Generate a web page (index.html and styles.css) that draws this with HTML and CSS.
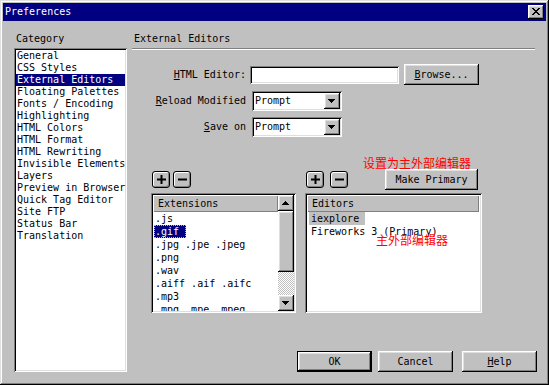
FILE: index.html
```html
<!DOCTYPE html>
<html lang="en">
<head>
  <meta charset="UTF-8" />
  <title>Preferences</title>
  <link rel="stylesheet" href="styles.css">
</head>
<body>
  <div class="dialog">
    <div class="titlebar">
      <span class="title">Preferences</span>
      <button class="close">
        <svg width="8" height="7" viewBox="0 0 8 7"><path d="M0 0h2v1H0zM6 0h2v1H6zM1 1h2v1H1zM5 1h2v1H5zM2 2h4v1H2zM3 3h2v1H3zM2 4h4v1H2zM1 5h2v1H1zM5 5h2v1H5zM0 6h2v1H0zM6 6h2v1H6z" fill="#000"/></svg>
      </button>
    </div>

    <div class="content">
      <div class="category">
        <div class="caption">Category</div>
        <ul class="listbox">
          <li>General</li>
          <li>CSS Styles</li>
          <li class="selected">External Editors</li>
          <li>Floating Palettes</li>
          <li>Fonts / Encoding</li>
          <li>Highlighting</li>
          <li>HTML Colors</li>
          <li>HTML Format</li>
          <li>HTML Rewriting</li>
          <li>Invisible Elements</li>
          <li>Layers</li>
          <li>Preview in Browser</li>
          <li>Quick Tag Editor</li>
          <li>Site FTP</li>
          <li>Status Bar</li>
          <li>Translation</li>
        </ul>
      </div>

      <div class="panel">
        <div class="panel-title">External Editors</div>
        <div class="rule"></div>

        <div class="form">
          <label><u>H</u>TML Editor:</label>
          <div class="field">
            <input type="text" class="textbox" />
            <button class="btn browse"><u>B</u>rowse...</button>
          </div>

          <label><u>R</u>eload Modified</label>
          <div class="field">
            <div class="select"><span>Prompt</span><span class="drop"><svg width="7" height="4" viewBox="0 0 7 4"><path d="M0 0h7v1H0zM1 1h5v1H1zM2 2h3v1H2zM3 3h1v1H3z" fill="#000"/></svg></span></div>
          </div>

          <label><u>S</u>ave on</label>
          <div class="field">
            <div class="select"><span>Prompt</span><span class="drop"><svg width="7" height="4" viewBox="0 0 7 4"><path d="M0 0h7v1H0zM1 1h5v1H1zM2 2h3v1H2zM3 3h1v1H3z" fill="#000"/></svg></span></div>
          </div>
        </div>

        <div class="editors">
          <div class="group ext-group">
            <div class="toolbar">
              <button class="mini"><svg width="9" height="9" viewBox="0 0 9 9"><path d="M3.5 0h2v3.5H9v2H5.5V9h-2V5.5H0v-2h3.5z" fill="#000"/></svg></button>
              <button class="mini"><svg width="9" height="9" viewBox="0 0 9 9"><path d="M0 3.5h9v2H0z" fill="#000"/></svg></button>
            </div>
            <div class="listview">
              <div class="lv-main">
                <div class="lv-header">Extensions</div>
                <ul class="lv-items">
                  <li><span>.js</span></li>
                  <li><span class="focused">.gif</span></li>
                  <li><span>.jpg .jpe .jpeg</span></li>
                  <li><span>.png</span></li>
                  <li><span>.wav</span></li>
                  <li><span>.aiff .aif .aifc</span></li>
                  <li><span>.mp3</span></li>
                  <li><span>.mpg .mpe .mpeg</span></li>
                </ul>
              </div>
              <div class="scrollbar">
                <div class="sb-btn"><svg width="7" height="4" viewBox="0 0 7 4"><path d="M3 0h1v1H3zM2 1h3v1H2zM1 2h5v1H1zM0 3h7v1H0z" fill="#000"/></svg></div>
                <div class="sb-thumb"></div>
                <div class="sb-track"></div>
                <div class="sb-btn"><svg width="7" height="4" viewBox="0 0 7 4"><path d="M0 0h7v1H0zM1 1h5v1H1zM2 2h3v1H2zM3 3h1v1H3z" fill="#000"/></svg></div>
              </div>
            </div>
          </div>

          <div class="group ed-group">
            <div class="toolbar">
              <button class="mini"><svg width="9" height="9" viewBox="0 0 9 9"><path d="M3.5 0h2v3.5H9v2H5.5V9h-2V5.5H0v-2h3.5z" fill="#000"/></svg></button>
              <button class="mini"><svg width="9" height="9" viewBox="0 0 9 9"><path d="M0 3.5h9v2H0z" fill="#000"/></svg></button>
              <button class="btn primary">Make Primary</button>
            </div>
            <div class="listview">
              <div class="lv-main">
                <div class="lv-header">Editors</div>
                <ul class="lv-items">
                  <li><span class="inactive">iexplore</span></li>
                  <li><span>Fireworks 3 (Primary)</span></li>
                </ul>
              </div>
            </div>
            <div class="note note-top">设置为主外部编辑器</div>
            <div class="note note-list">主外部编辑器</div>
          </div>
        </div>

        <div class="actions">
          <button class="btn default">OK</button>
          <button class="btn cancel">Cancel</button>
          <button class="btn"><u>H</u>elp</button>
        </div>
      </div>
    </div>
  </div>
</body>
</html>
```

FILE: styles.css
```css
* {
  box-sizing: border-box;
}

body {
  margin: 0;
  background: #c0c0c0;
  font-family: "DejaVu Sans Mono", monospace;
  font-size: 10px;
  line-height: 12px;
  color: #000;
}

ul {
  list-style: none;
  margin: 0;
  padding: 0;
}

button {
  font: inherit;
  color: #000;
  background: #c0c0c0;
  border: none;
  padding: 0;
}

u {
  text-decoration: underline;
  text-underline-offset: 1px;
}

.dialog {
  width: 549px;
  height: 385px;
  padding: 3px;
  background: #c0c0c0;
  display: flex;
  flex-direction: column;
  box-shadow: inset -1px -1px #000, inset 1px 1px #dfdfdf,
    inset -2px -2px #808080, inset 2px 2px #fff;
}

/* title bar */
.titlebar {
  height: 18px;
  flex: none;
  background: #000080;
  color: #fff;
  display: flex;
  align-items: center;
  padding: 0 2px 0 2px;
}

.title {
  flex: 1;
}

.close {
  width: 16px;
  height: 14px;
  display: flex;
  align-items: center;
  justify-content: center;
  padding: 0 1px 1px 0;
}

.close,
.btn,
.drop,
.sb-btn,
.sb-thumb {
  box-shadow: inset -1px -1px #000, inset 1px 1px #fff,
    inset -2px -2px #808080, inset 2px 2px #dfdfdf;
}

/* body */
.content {
  flex: 1;
  display: flex;
  padding: 12px 0 0 11px;
}

.category {
  width: 113px;
  flex: none;
}

.caption {
  padding-left: 2px;
}

.listbox {
  margin-top: 3px;
  height: 324px;
  padding: 2px;
  background: #fff;
  box-shadow: inset 1px 1px #808080, inset -1px -1px #fff,
    inset 2px 2px #000, inset -2px -2px #dfdfdf;
}

.listbox li {
  padding-left: 1px;
  height: 12px;
  white-space: nowrap;
}

.listbox li.selected {
  background: #000080;
  color: #fff;
}

.panel {
  width: 405px;
  margin-left: 5px;
}

.panel-title {
  padding-left: 2px;
}

.rule {
  margin: 3px 2px 0 0;
  height: 2px;
  border-top: 1px solid #808080;
  border-bottom: 1px solid #fff;
}

/* form */
.form {
  margin-top: 14px;
  display: grid;
  grid-template-columns: 114px auto;
  grid-template-rows: 21px 20px 20px;
  column-gap: 4px;
  row-gap: 6px;
}

.form label {
  text-align: right;
  align-self: center;
  white-space: nowrap;
}

.field {
  display: flex;
  align-items: center;
}

.textbox {
  width: 149px;
  height: 18px;
  border: none;
  outline: none;
  background: #fff;
  font: inherit;
  box-shadow: inset 1px 1px #808080, inset -1px -1px #fff,
    inset 2px 2px #000, inset -2px -2px #dfdfdf;
}

.btn {
  width: 75px;
  height: 21px;
}

.browse {
  margin-left: 5px;
}

.select {
  width: 90px;
  height: 20px;
  margin-left: 2px;
  padding: 2px;
  display: flex;
  align-items: center;
  background: #fff;
  box-shadow: inset 1px 1px #808080, inset -1px -1px #fff,
    inset 2px 2px #000, inset -2px -2px #dfdfdf;
}

.select span:first-child {
  flex: 1;
  padding-left: 1px;
}

.drop {
  width: 16px;
  height: 16px;
  background: #c0c0c0;
  display: flex;
  align-items: center;
  justify-content: center;
  padding: 0 1px 1px 0;
}

/* extension / editor lists */
.editors {
  margin-top: 32px;
  padding-left: 19px;
  display: flex;
  gap: 9px;
}

.group {
  position: relative;
}

.ext-group {
  width: 145px;
}

.ed-group {
  width: 177px;
}

.toolbar {
  height: 21px;
  display: flex;
  align-items: center;
  gap: 3px;
  padding-left: 1px;
}

.ed-group .toolbar {
  gap: 6px;
}

.mini {
  width: 18px;
  height: 17px;
  border: 1px solid #000;
  border-radius: 3px;
  display: flex;
  align-items: center;
  justify-content: center;
  box-shadow: inset 1px 1px #fff, inset -1px -1px #808080;
}

.primary {
  width: 93px;
  margin: 0 4px 0 auto;
}

.listview {
  margin-top: 3px;
  height: 120px;
  padding: 2px;
  display: flex;
  background: #fff;
  box-shadow: inset 1px 1px #808080, inset -1px -1px #fff,
    inset 2px 2px #000, inset -2px -2px #dfdfdf;
}

.lv-main {
  flex: 1;
  overflow: hidden;
}

.ed-group .lv-main {
  margin-right: 1px;
}

.lv-header {
  height: 17px;
  padding: 3px 0 0 5px;
  background: #c0c0c0;
  box-shadow: inset 1px 1px #fff, inset -1px -1px #808080;
}

.lv-items li {
  height: 13px;
  line-height: 13px;
  padding-left: 1px;
  white-space: nowrap;
}

.ed-group .lv-items li {
  padding-left: 2px;
}

.lv-items span {
  display: inline-block;
  padding: 0 7px 0 1px;
}

.ed-group .lv-items span {
  padding: 0 6px 0 2px;
}

.lv-items .focused {
  background: #000080;
  color: #fff;
  outline: 1px dotted #c0c080;
  outline-offset: -1px;
}

.lv-items .inactive {
  background: #c0c0c0;
}

.scrollbar {
  width: 16px;
  flex: none;
  display: flex;
  flex-direction: column;
}

.sb-btn {
  height: 16px;
  background: #c0c0c0;
  display: flex;
  align-items: center;
  justify-content: center;
  padding: 0 1px 1px 0;
}

.sb-thumb {
  height: 61px;
  background: #c0c0c0;
}

.sb-track {
  flex: 1;
  background: repeating-conic-gradient(#fff 0 25%, #c0c0c0 0 50%) 0 0 / 2px 2px;
}

/* annotations laid over the screenshot */
.note {
  position: absolute;
  color: #f00;
  font-family: "Noto Sans CJK SC", sans-serif;
  font-size: 12px;
  line-height: 12px;
  white-space: nowrap;
}

.note-top {
  left: 58px;
  top: -12px;
}

.note-list {
  left: 71px;
  top: 65px;
}

/* dialog buttons */
.actions {
  margin-top: 38px;
  display: flex;
  justify-content: flex-end;
}

.default {
  margin-right: 6px;
  box-shadow: inset 0 0 0 1px #000, inset -2px -2px #000, inset 2px 2px #fff,
    inset -3px -3px #808080, inset 3px 3px #dfdfdf;
}

.cancel {
  margin-right: 9px;
}
```
